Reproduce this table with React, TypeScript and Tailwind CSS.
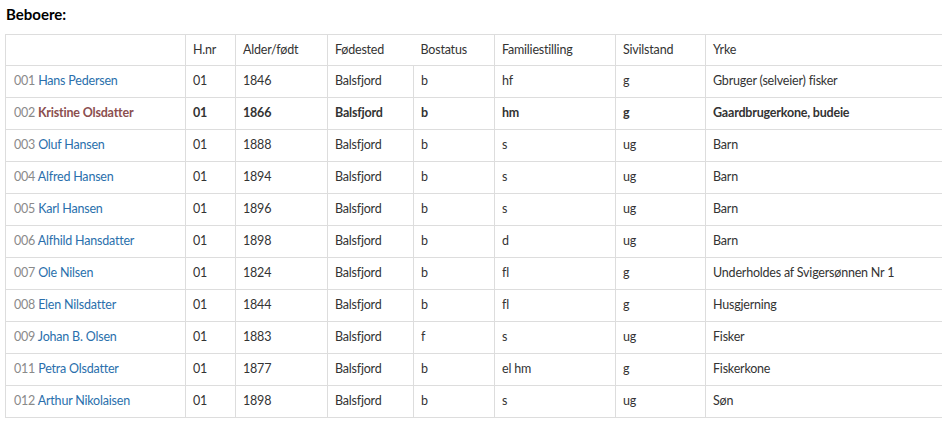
import React from "react";

type Row = {
  nr: string;
  name: string;
  hnr: string;
  born: string;
  place: string;
  bo: string;
  fam: string;
  sivil: string;
  yrke: string;
  bold?: boolean;
};

const rows: Row[] = [
  { nr: "001", name: "Hans Pedersen", hnr: "01", born: "1846", place: "Balsfjord", bo: "b", fam: "hf", sivil: "g", yrke: "Gbruger (selveier) fisker" },
  { nr: "002", name: "Kristine Olsdatter", hnr: "01", born: "1866", place: "Balsfjord", bo: "b", fam: "hm", sivil: "g", yrke: "Gaardbrugerkone, budeie", bold: true },
  { nr: "003", name: "Oluf Hansen", hnr: "01", born: "1888", place: "Balsfjord", bo: "b", fam: "s", sivil: "ug", yrke: "Barn" },
  { nr: "004", name: "Alfred Hansen", hnr: "01", born: "1894", place: "Balsfjord", bo: "b", fam: "s", sivil: "ug", yrke: "Barn" },
  { nr: "005", name: "Karl Hansen", hnr: "01", born: "1896", place: "Balsfjord", bo: "b", fam: "s", sivil: "ug", yrke: "Barn" },
  { nr: "006", name: "Alfhild Hansdatter", hnr: "01", born: "1898", place: "Balsfjord", bo: "b", fam: "d", sivil: "ug", yrke: "Barn" },
  { nr: "007", name: "Ole Nilsen", hnr: "01", born: "1824", place: "Balsfjord", bo: "b", fam: "fl", sivil: "g", yrke: "Underholdes af Svigersønnen Nr 1" },
  { nr: "008", name: "Elen Nilsdatter", hnr: "01", born: "1844", place: "Balsfjord", bo: "b", fam: "fl", sivil: "g", yrke: "Husgjerning" },
  { nr: "009", name: "Johan B. Olsen", hnr: "01", born: "1883", place: "Balsfjord", bo: "f", fam: "s", sivil: "ug", yrke: "Fisker" },
  { nr: "011", name: "Petra Olsdatter", hnr: "01", born: "1877", place: "Balsfjord", bo: "b", fam: "el hm", sivil: "g", yrke: "Fiskerkone" },
  { nr: "012", name: "Arthur Nikolaisen", hnr: "01", born: "1898", place: "Balsfjord", bo: "b", fam: "s", sivil: "ug", yrke: "Søn" },
];

export default function App() {
  const td = "h-[32px] border-l border-b border-[#dddddd] px-[7px] align-middle";
  const th = "h-[31px] border-t border-b border-[#dddddd] px-[7px] align-middle text-left font-normal";

  return (
    <div className="w-[942px] h-[422px] overflow-hidden bg-white text-[#333333] text-[12.5px] tracking-[-0.2px]" style={{ fontFamily: "Lato, 'Open Sans', sans-serif" }}>
      <div className="h-[34px] pl-[6px] pt-[4px] text-[15px] font-bold leading-[20px] tracking-normal text-black">Beboere:</div>
      <table className="ml-[5px] w-[937px] table-fixed border-collapse">
        <colgroup>
          <col className="w-[180px]" />
          <col className="w-[50px]" />
          <col className="w-[92px]" />
          <col className="w-[86px]" />
          <col className="w-[81px]" />
          <col className="w-[121px]" />
          <col className="w-[90px]" />
          <col />
        </colgroup>
        <thead>
          <tr>
            <th className={`${th} border-l`}></th>
            <th className={`${th} border-l`}>H.nr</th>
            <th className={`${th} border-l`}>Alder/født</th>
            <th className={`${th} border-l`}>Fødested</th>
            <th className={th}>Bostatus</th>
            <th className={`${th} border-l`}>Familiestilling</th>
            <th className={`${th} border-l`}>Sivilstand</th>
            <th className={`${th} border-l`}>Yrke</th>
          </tr>
        </thead>
        <tbody>
          {rows.map((r) => (
            <tr key={r.nr} className={r.bold ? "font-bold" : ""}>
              <td className={`${td} pl-[8px]`}>
                <span className="font-normal text-[#8a8a8a]">{r.nr}</span>{" "}
                <span className={r.bold ? "text-[#8b4f4f]" : "text-[#2a6fac]"}>{r.name}</span>
              </td>
              <td className={td}>{r.hnr}</td>
              <td className={td}>{r.born}</td>
              <td className={td}>{r.place}</td>
              <td className={td}>{r.bo}</td>
              <td className={td}>{r.fam}</td>
              <td className={td}>{r.sivil}</td>
              <td className={td}>{r.yrke}</td>
            </tr>
          ))}
        </tbody>
      </table>
    </div>
  );
}
